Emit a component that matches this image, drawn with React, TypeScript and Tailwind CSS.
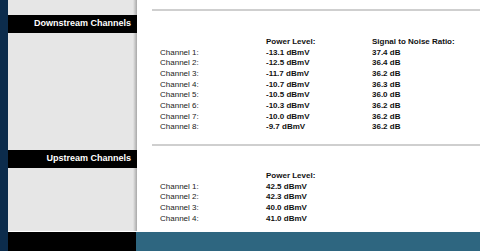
const downstream = [
  { name: "Channel 1:", power: "-13.1 dBmV", snr: "37.4 dB" },
  { name: "Channel 2:", power: "-12.5 dBmV", snr: "36.4 dB" },
  { name: "Channel 3:", power: "-11.7 dBmV", snr: "36.2 dB" },
  { name: "Channel 4:", power: "-10.7 dBmV", snr: "36.3 dB" },
  { name: "Channel 5:", power: "-10.5 dBmV", snr: "36.0 dB" },
  { name: "Channel 6:", power: "-10.3 dBmV", snr: "36.2 dB" },
  { name: "Channel 7:", power: "-10.0 dBmV", snr: "36.2 dB" },
  { name: "Channel 8:", power: "-9.7 dBmV", snr: "36.2 dB" },
];

const upstream = [
  { name: "Channel 1:", power: "42.5 dBmV" },
  { name: "Channel 2:", power: "42.3 dBmV" },
  { name: "Channel 3:", power: "40.0 dBmV" },
  { name: "Channel 4:", power: "41.0 dBmV" },
];

function SectionBar({ title }: { title: string }) {
  return (
    <div className="h-[18px] bg-black flex items-center justify-end pr-[6px] text-white font-bold text-[9px]">
      {title}
    </div>
  );
}

function Row({ cells }: { cells: string[] }) {
  return (
    <div className="flex h-[10.67px] items-center leading-[10.67px]">
      <div className="w-[106px] text-[#222]">{cells[0]}</div>
      <div className="w-[106px] font-bold text-[#111]">{cells[1]}</div>
      {cells[2] !== undefined && <div className="font-bold text-[#111]">{cells[2]}</div>}
    </div>
  );
}

export default function App() {
  return (
    <div className="w-[480px] h-[251px] flex overflow-hidden bg-white font-['Liberation_Sans',Arial,sans-serif]">
      <div className="w-[8px] h-full bg-[#0c2c4c] shrink-0" />
      <div className="flex-1 flex flex-col">
        <div className="h-[232px] flex">
          {/* sidebar */}
          <div className="w-[129px] shrink-0 relative bg-[#e6e6e6] border-b border-white">
            <div className="absolute right-0 top-0 bottom-0 w-[4px] bg-gradient-to-r from-[#e6e6e6] to-[#a8a8a8]" />
            <div className="relative pt-[15px]">
              <SectionBar title="Downstream Channels" />
              <div className="h-[117px]" />
              <SectionBar title="Upstream Channels" />
            </div>
          </div>
          {/* content */}
          <div className="flex-1 pt-[9px] text-[8px]">
            <div className="ml-[15px] h-[2px] bg-[#cfcfcf]" />
            <div className="mt-[26px] pl-[23px]">
              <Row cells={["", "Power Level:", "Signal to Noise Ratio:"]} />
              {downstream.map((c) => (
                <Row key={c.name} cells={[c.name, c.power, c.snr]} />
              ))}
            </div>
            <div className="mt-[11px] ml-[15px] h-[2px] bg-[#cfcfcf]" />
            <div className="mt-[25px] pl-[23px]">
              <Row cells={["", "Power Level:"]} />
              {upstream.map((c) => (
                <Row key={c.name} cells={[c.name, c.power]} />
              ))}
            </div>
          </div>
        </div>
        <div className="flex-1 flex">
          <div className="w-[128px] bg-black" />
          <div className="flex-1 bg-[#2e6680]" />
        </div>
      </div>
    </div>
  );
}
